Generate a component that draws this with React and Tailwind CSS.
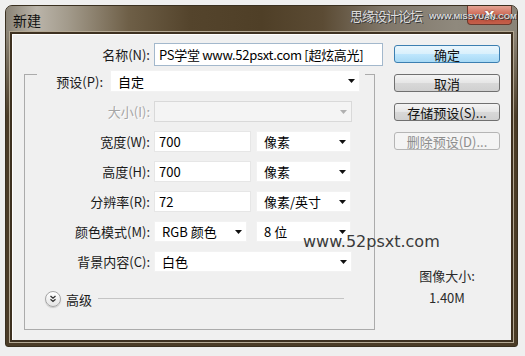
import React from 'react';

const cjk = "font-['Noto_Sans_CJK_SC',sans-serif]";

const Arrow = ({ disabled }) => (
  <svg width="7" height="4" viewBox="0 0 7 4" className="shrink-0">
    <path d="M0 0h7L3.5 4z" fill={disabled ? '#b0b0b0' : '#111'} />
  </svg>
);

const Select = ({ width, value, disabled, height = 'h-[21px]' }) => (
  <div
    className={`${width} ${height} flex items-center justify-between pl-[7px] pr-[4px] ${
      disabled ? 'border border-[#d9d9d9] bg-[#f4f4f4]' : 'border border-[#f2f2f2] bg-white'
    }`}
  >
    <span className="leading-none text-black">{value}</span>
    <Arrow disabled={disabled} />
  </div>
);

const Input = ({ width, value }) => (
  <div className={`${width} flex h-[21px] items-center border border-[#e6e6e6] bg-white pl-[4px] leading-none text-black`}>
    {value}
  </div>
);

const Row = ({ label, disabled, children }) => (
  <div className="mt-[9px] flex h-[21px] items-center">
    <div
      className={`w-[125px] text-right leading-none ${
        disabled ? 'text-[#a6a6a6] [text-shadow:1px_1px_0_#ffffff]' : 'text-[#1a1a1a]'
      }`}
    >
      {label}
    </div>
    <div className="ml-[4px] flex h-full items-center">{children}</div>
  </div>
);

const Button = ({ children, primary, disabled }) => {
  let look = 'border-[#707070] bg-[linear-gradient(to_bottom,#f4f4f4,#e6e6e6_48%,#d8d8d8_52%,#d0d0d0)] text-[#111]';
  if (primary)
    look = 'border-[#3c7fb1] bg-[linear-gradient(to_bottom,#eaf6fd,#d9f0fc_48%,#bee6fd_52%,#a7d9f5)] text-[#111]';
  if (disabled) look = 'border-[#b5b5b5] bg-[#f4f4f4] text-[#8d8d8d]';
  return (
    <div className={`flex h-[18px] w-[106px] items-center justify-center rounded-[3px] border leading-none ${look}`}>
      {children}
    </div>
  );
};

export default function App() {
  return (
    <div className={`h-[356px] w-[525px] overflow-hidden bg-[#efefef] pl-[5px] pt-[5px] text-[13px] ${cjk}`}>
      <div className="flex h-[342px] w-[513px] flex-col overflow-hidden rounded-t-[7px] rounded-b-[3px] border border-[#3a3020] bg-[linear-gradient(to_bottom,#8e877a_0px,#8a8274_30px,#4b3c27_110px,#4b3c27_100%)]">
        {/* title bar */}
        <div className="relative flex h-[26px] shrink-0 items-center bg-[linear-gradient(to_right,#8a8376_0%,#bab4a9_6%,#a39b8c_12%,#6e5f47_24%,#54442c_36%,#4f3f27_50%,#5b4b34_62%,#80776a_74%,#8f897d_88%,#8a8478_100%)] pl-[7px]">
          <span className="mt-[2px] text-[14px] leading-none text-[#111]">新建</span>
          <div className="absolute right-[5px] top-0 flex h-[19px] w-[45px] items-center justify-center rounded-b-[4px] border border-t-0 border-[#6b3a2e] bg-[linear-gradient(to_bottom,#e3a393,#cf6d5a_45%,#bd4a36_55%,#c35f4a)]">
            <span className="font-['DejaVu_Sans',sans-serif] text-[13px] font-bold leading-none text-white [text-shadow:0_0_2px_#5a2a20]">
              X
            </span>
          </div>
          <div className="absolute left-[344px] top-[3px] flex items-center gap-[7px]">
            <span className="text-[13px] leading-none tracking-[-1px] text-[#dcdcdc] [text-shadow:1px_1px_0_#3a3a3a,-1px_0_0_#555555]">
              思缘设计论坛
            </span>
            <span className="mt-[3px] font-['Liberation_Sans',sans-serif] text-[8px] font-bold leading-none text-[#d8d8d8] [text-shadow:1px_1px_0_#3a3a3a,-1px_0_0_#555555]">
              WWW.MISSYUAN.COM
            </span>
          </div>
        </div>

        {/* body */}
        <div className="flex-1 px-[4px] pb-[4px]">
          <div className="relative flex h-full border-2 border-[#3e3121] bg-[#f0f0f0] shadow-[0_0_0_1px_#b4a994,inset_1px_1px_0_#ffffff]">
            {/* left column */}
            <div className="w-[371px]">
              <div className="mt-[9px] flex h-[23px] items-center">
                <div className="w-[138px] text-right leading-none text-[#1a1a1a]">名称(N):</div>
                <div className="ml-[4px] flex h-[23px] w-[229px] items-center overflow-hidden whitespace-nowrap border border-[#a3b8cc] bg-white pl-[4px] text-[13px] leading-none tracking-[-0.3px] text-black">
                  PS学堂 www.52psxt.com [超炫高光]
                </div>
              </div>

              <div className="ml-[12px] mt-[8px] h-[256px] w-[351px] border border-[#ababab]">
                <div className="-mt-[5px] ml-[12px] flex h-[22px] w-[328px] items-center bg-[#f0f0f0]">
                  <div className="w-[66px] text-right leading-none text-[#1a1a1a]">预设(P):</div>
                  <div className="ml-[7px]">
                    <Select width="w-[250px]" height="h-[22px]" value="自定" />
                  </div>
                </div>

                <Row label="大小(I):" disabled>
                  <Select width="w-[198px]" value="" disabled />
                </Row>
                <Row label="宽度(W):">
                  <Input width="w-[97px]" value="700" />
                  <div className="ml-[5px]">
                    <Select width="w-[95px]" value="像素" />
                  </div>
                </Row>
                <Row label="高度(H):">
                  <Input width="w-[97px]" value="700" />
                  <div className="ml-[5px]">
                    <Select width="w-[95px]" value="像素" />
                  </div>
                </Row>
                <Row label="分辨率(R):">
                  <Input width="w-[97px]" value="72" />
                  <div className="ml-[5px]">
                    <Select width="w-[95px]" value="像素/英寸" />
                  </div>
                </Row>
                <Row label="颜色模式(M):">
                  <Select width="w-[93px]" value="RGB 颜色" />
                  <div className="ml-[9px]">
                    <Select width="w-[95px]" value="8 位" />
                  </div>
                </Row>
                <Row label="背景内容(C):">
                  <Select width="w-[198px]" value="白色" />
                </Row>

                <div className="ml-[20px] mt-[19px] flex h-[16px] items-center">
                  <div className="flex h-[16px] w-[16px] items-center justify-center rounded-full border border-[#a5a5a5] bg-[linear-gradient(to_bottom,#ffffff,#e4e4e4)] shadow-[0_1px_1px_#c8c8c8]">
                    <svg width="10" height="10" viewBox="0 0 10 10">
                      <path d="M2.5 2l2.5 2.2L7.5 2M2.5 5.3l2.5 2.2 2.5-2.2" fill="none" stroke="#333" strokeWidth="1.3" />
                    </svg>
                  </div>
                  <span className="ml-[5px] leading-none text-[#1a1a1a]">高级</span>
                  <div className="ml-[6px] h-[2px] w-[246px] border-t border-[#c4c4c4] border-b-white" />
                </div>
              </div>
            </div>

            {/* right column */}
            <div className="ml-[11px] mt-[11px] flex w-[106px] flex-col">
              <div className="flex flex-col gap-[11px]">
                <Button primary>确定</Button>
                <Button>取消</Button>
                <Button>存储预设(S)...</Button>
                <Button disabled>删除预设(D)...</Button>
              </div>
              <div className="mt-[117px] text-center leading-[17px] text-[#2a2a2a]">图像大小:</div>
              <div className="mt-[5px] text-center leading-[17px] text-[#2a2a2a]">1.40M</div>
            </div>

            {/* watermark */}
            <div className="absolute left-[291px] top-[199px] font-['DejaVu_Sans',sans-serif] text-[16px] leading-[18px] text-[#3a3a3a]">
              www.52psxt.com
            </div>
          </div>
        </div>
      </div>
    </div>
  );
}
